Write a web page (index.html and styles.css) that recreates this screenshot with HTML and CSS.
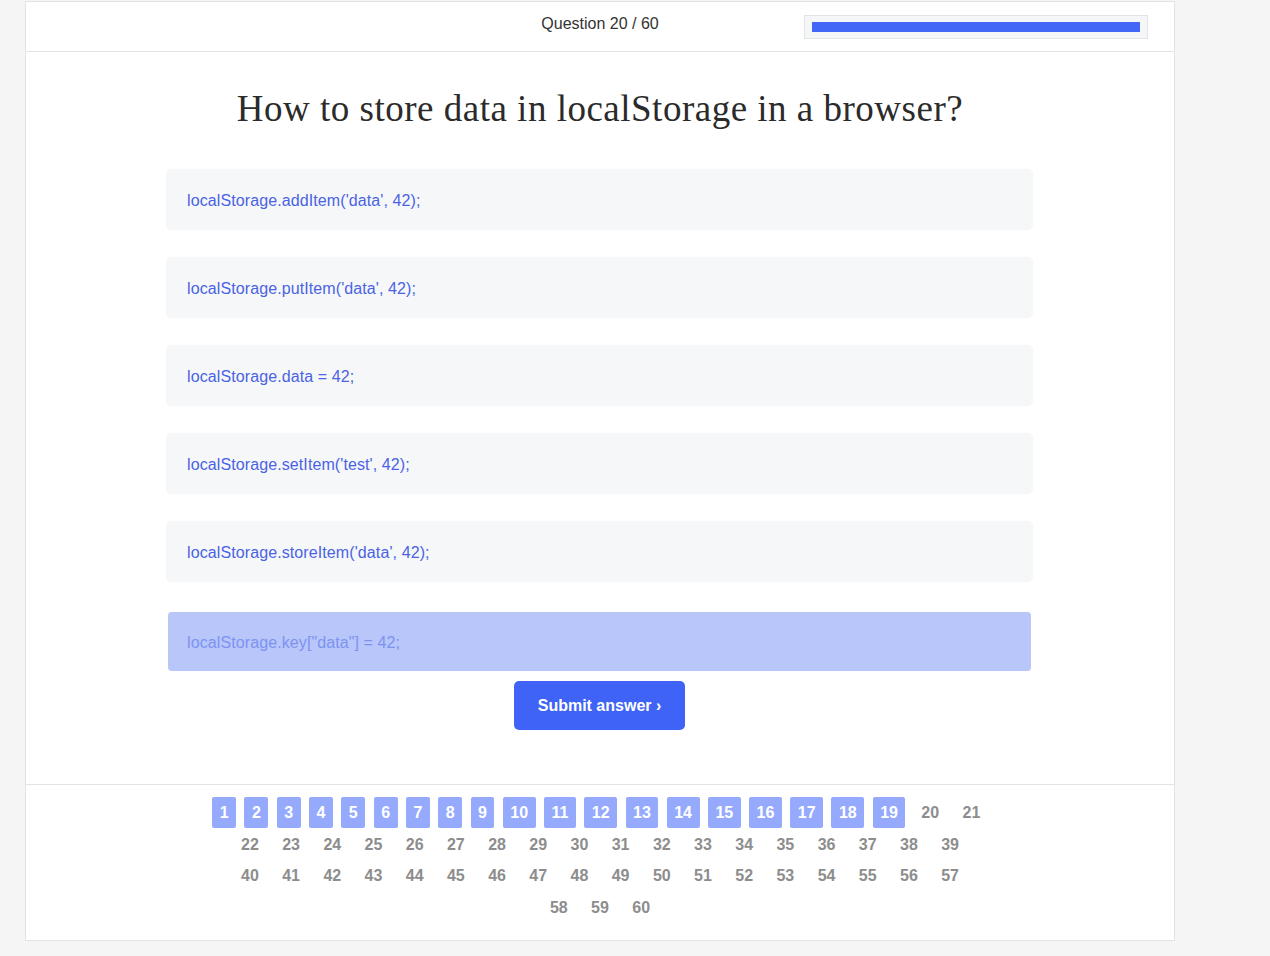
FILE: index.html
```html
<!DOCTYPE html>
<html lang="en">
<head>
<meta charset="utf-8">
<title>Quiz</title>
<link rel="stylesheet" href="styles.css">
</head>
<body>
<div class="card">
  <header class="topbar">
    <div class="topbar-side"></div>
    <div class="counter">Question 20 / 60</div>
    <div class="progress-wrap">
      <div class="progress">
        <div class="progress-fill" style="width: 100%"></div>
      </div>
    </div>
  </header>

  <main class="quiz">
    <h1 class="question">How to store data in localStorage in a browser?</h1>
    <div class="options">
      <div class="option">localStorage.addItem('data', 42);</div>
      <div class="option">localStorage.putItem('data', 42);</div>
      <div class="option">localStorage.data = 42;</div>
      <div class="option">localStorage.setItem('test', 42);</div>
      <div class="option">localStorage.storeItem('data', 42);</div>
      <div class="option option-selected">localStorage.key["data"] = 42;</div>
    </div>
    <button class="submit">Submit answer ›</button>
  </main>

  <footer class="pager">
    <div class="pager-row">
      <span class="page done">1</span><span class="page done">2</span><span class="page done">3</span><span class="page done">4</span><span class="page done">5</span><span class="page done">6</span><span class="page done">7</span><span class="page done">8</span><span class="page done">9</span><span class="page done">10</span><span class="page done">11</span><span class="page done">12</span><span class="page done">13</span><span class="page done">14</span><span class="page done">15</span><span class="page done">16</span><span class="page done">17</span><span class="page done">18</span><span class="page done">19</span><span class="page">20</span><span class="page">21</span>
    </div>
    <div class="pager-row">
      <span class="page">22</span><span class="page">23</span><span class="page">24</span><span class="page">25</span><span class="page">26</span><span class="page">27</span><span class="page">28</span><span class="page">29</span><span class="page">30</span><span class="page">31</span><span class="page">32</span><span class="page">33</span><span class="page">34</span><span class="page">35</span><span class="page">36</span><span class="page">37</span><span class="page">38</span><span class="page">39</span>
    </div>
    <div class="pager-row">
      <span class="page">40</span><span class="page">41</span><span class="page">42</span><span class="page">43</span><span class="page">44</span><span class="page">45</span><span class="page">46</span><span class="page">47</span><span class="page">48</span><span class="page">49</span><span class="page">50</span><span class="page">51</span><span class="page">52</span><span class="page">53</span><span class="page">54</span><span class="page">55</span><span class="page">56</span><span class="page">57</span>
    </div>
    <div class="pager-row">
      <span class="page">58</span><span class="page">59</span><span class="page">60</span>
    </div>
  </footer>
</div>
</body>
</html>
```

FILE: styles.css
```css
html, body {
  margin: 0;
  padding: 0;
}

body {
  background: #f5f5f5;
  font-family: "Liberation Sans", Arial, sans-serif;
  color: #333;
}

.card {
  width: 1148px;
  margin: 1px 0 0 25px;
  background: #fff;
  border: 1px solid #e3e3e3;
}

.topbar {
  display: grid;
  grid-template-columns: 1fr 1fr 1fr;
  align-items: center;
  height: 49px;
  border-bottom: 1px solid #e3e3e3;
}

.counter {
  text-align: center;
  font-size: 16px;
  color: #333;
  padding-bottom: 6px;
}

.progress-wrap {
  padding: 0 26px 0 13px;
}

.progress {
  height: 10px;
  padding: 6px 7px;
  background: #f5f6f7;
  border: 1px solid #e4e4e4;
}

.progress-fill {
  height: 10px;
  background: #4266f5;
}

.quiz {
  display: flex;
  flex-direction: column;
  align-items: center;
  padding: 0 0 54px;
}

.question {
  margin: 31px 0 34px;
  font-family: "Liberation Serif", Georgia, serif;
  font-weight: normal;
  font-size: 37px;
  line-height: 52px;
  color: #2b2b2b;
  letter-spacing: 0.5px;
}

.options {
  display: flex;
  flex-direction: column;
  gap: 27px;
  width: 867px;
  margin-right: 1px;
}

.option {
  height: 61px;
  box-sizing: border-box;
  padding: 2px 21px 0;
  display: flex;
  align-items: center;
  background: #f6f7f9;
  border-radius: 6px;
  box-shadow: 0 0 1px rgba(0, 0, 0, 0.06);
  font-size: 16px;
  letter-spacing: 0.1px;
  color: #4a63e4;
}

.option-selected {
  margin: 3px 2px 0;
  height: 59px;
  padding-left: 19px;
  background: #b9c6f9;
  color: #7c93f2;
  border-radius: 4px;
}

.submit {
  margin: 10px 1px 0 0;
  width: 171px;
  height: 49px;
  border: none;
  border-radius: 5px;
  background: #3f63f6;
  color: #fff;
  font-family: "Liberation Sans", Arial, sans-serif;
  font-weight: bold;
  font-size: 16px;
  cursor: pointer;
}

.pager {
  border-top: 1px solid #e3e3e3;
  padding: 12px 0 17px;
  display: flex;
  flex-direction: column;
}

.pager-row {
  display: flex;
  justify-content: center;
  gap: 8.4px;
  height: 31.5px;
}

.page {
  height: 31px;
  line-height: 31px;
  padding: 0 7.5px;
  font-size: 16px;
  font-weight: bold;
  color: #8d8d8d;
  border-radius: 2px;
}

.page.done {
  background: #95aafc;
  color: #fff;
}
```
